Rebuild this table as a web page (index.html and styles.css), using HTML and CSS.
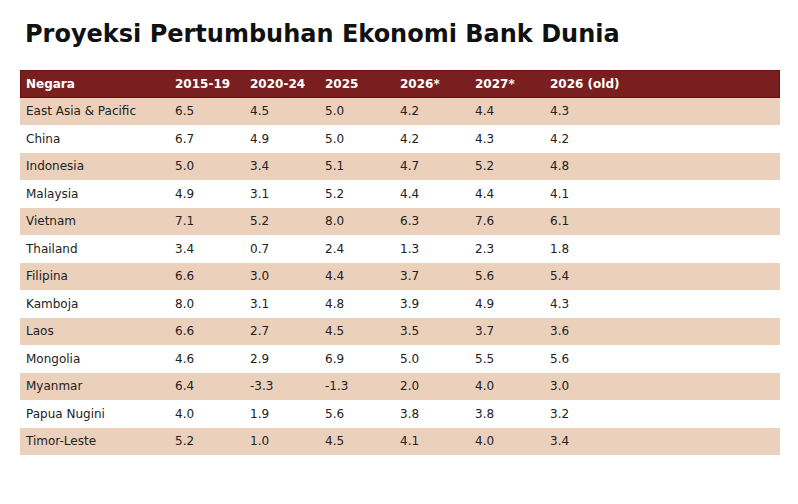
FILE: index.html
```html
<!DOCTYPE html>
<html>
<head>
<meta charset="utf-8">
<link rel="stylesheet" href="styles.css">
</head>
<body>
<h1 class="title">Proyeksi Pertumbuhan Ekonomi Bank Dunia</h1>
<table class="data">
<thead>
<tr><th class="c-name">Negara</th><th>2015-19</th><th>2020-24</th><th>2025</th><th>2026*</th><th>2027*</th><th class="c-last">2026 (old)</th></tr>
</thead>
<tbody>
<tr><td>East Asia &amp; Pacific</td><td>6.5</td><td>4.5</td><td>5.0</td><td>4.2</td><td>4.4</td><td>4.3</td></tr>
<tr><td>China</td><td>6.7</td><td>4.9</td><td>5.0</td><td>4.2</td><td>4.3</td><td>4.2</td></tr>
<tr><td>Indonesia</td><td>5.0</td><td>3.4</td><td>5.1</td><td>4.7</td><td>5.2</td><td>4.8</td></tr>
<tr><td>Malaysia</td><td>4.9</td><td>3.1</td><td>5.2</td><td>4.4</td><td>4.4</td><td>4.1</td></tr>
<tr><td>Vietnam</td><td>7.1</td><td>5.2</td><td>8.0</td><td>6.3</td><td>7.6</td><td>6.1</td></tr>
<tr><td>Thailand</td><td>3.4</td><td>0.7</td><td>2.4</td><td>1.3</td><td>2.3</td><td>1.8</td></tr>
<tr><td>Filipina</td><td>6.6</td><td>3.0</td><td>4.4</td><td>3.7</td><td>5.6</td><td>5.4</td></tr>
<tr><td>Kamboja</td><td>8.0</td><td>3.1</td><td>4.8</td><td>3.9</td><td>4.9</td><td>4.3</td></tr>
<tr><td>Laos</td><td>6.6</td><td>2.7</td><td>4.5</td><td>3.5</td><td>3.7</td><td>3.6</td></tr>
<tr><td>Mongolia</td><td>4.6</td><td>2.9</td><td>6.9</td><td>5.0</td><td>5.5</td><td>5.6</td></tr>
<tr><td>Myanmar</td><td>6.4</td><td>-3.3</td><td>-1.3</td><td>2.0</td><td>4.0</td><td>3.0</td></tr>
<tr><td>Papua Nugini</td><td>4.0</td><td>1.9</td><td>5.6</td><td>3.8</td><td>3.8</td><td>3.2</td></tr>
<tr><td>Timor-Leste</td><td>5.2</td><td>1.0</td><td>4.5</td><td>4.1</td><td>4.0</td><td>3.4</td></tr>
</tbody>
</table>
</body>
</html>
```
FILE: styles.css
```css
html, body {
  margin: 0;
  padding: 0;
  background: #ffffff;
}
body {
  padding: 20px 18px 0 20px;
  font-family: "DejaVu Sans", sans-serif;
  color: #222222;
}
.title {
  margin: 0 0 21px 5px;
  font-size: 24px;
  line-height: 29px;
  font-weight: bold;
  color: #111111;
}
.data {
  width: 760px;
  border-collapse: collapse;
  table-layout: fixed;
  font-size: 12px;
}
.data th, .data td {
  height: 27.5px;
  padding: 0 0 0 6px;
  text-align: left;
  vertical-align: middle;
  width: 75px;
  box-sizing: border-box;
  white-space: nowrap;
}
.data th.c-name { width: 149px; }
.data th.c-last { width: auto; }
.data thead tr {
  background: #7a1f1f;
  outline: 1px solid #6a1010;
  outline-offset: -1px;
}
.data th {
  color: #ffffff;
  font-weight: bold;
}
.data tbody tr:nth-child(odd) { background: #ebd0bc; }
.data tbody tr:nth-child(even) { background: #ffffff; }
```
